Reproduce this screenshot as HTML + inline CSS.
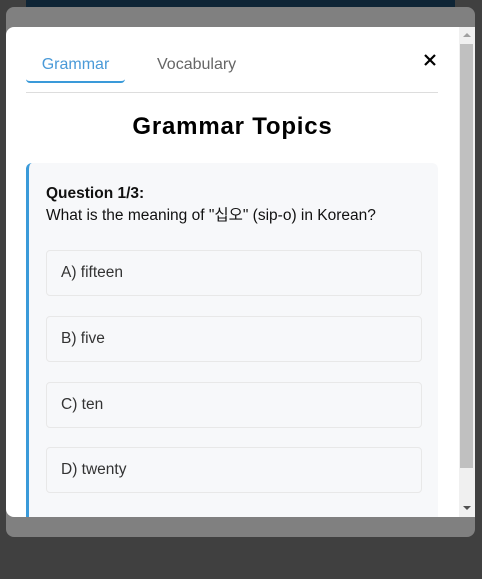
<!DOCTYPE html>
<html><head><style>
body{margin:0;width:482px;height:579px;background:#404040;position:relative;overflow:hidden;font-family:"Liberation Sans",Arial,sans-serif}
.nav{position:absolute;left:26px;top:0;width:429px;height:7px;background:#0f2536}
.grey{position:absolute;left:6px;top:7px;width:469px;height:530px;background:#808080;border-radius:8px}
.modal{position:absolute;left:6px;top:27px;width:453px;height:490px;background:#fff;border-radius:8px 0 0 8px;overflow:hidden}
.sb{position:absolute;left:459px;top:27px;width:16px;height:490px;background:#f0f0f0}
.thumb{position:absolute;left:1px;top:17px;width:13px;height:424px;background:#c0c0c0}
.tab{position:absolute;font-size:16px}
.t1{left:20px;width:99px;text-align:center;color:#4a9ad8;height:25px;border-bottom:2px solid #3a9ad9;border-radius:0 0 4px 4px}
.t2{left:151px;color:#666}
.line{position:absolute;left:20px;width:412px;height:1px;background:#ddd}
h1{position:absolute;left:0;width:453px;text-align:center;margin:0;font-size:24px;font-weight:bold;color:#000;letter-spacing:0.8px}
.card{position:absolute;left:20px;top:136px;width:409px;height:380px;background:#f7f8fa;border-left:3px solid #3a9ad9;border-radius:6px}
.q{position:absolute;left:17px;top:20px;font-size:15.5px;color:#111;line-height:21px}
.opt{position:absolute;left:17px;border:1px solid #e8e8e8;border-radius:4px;background:#f7f8fa;font-size:15.5px;color:#333;line-height:44px;padding-left:14px;box-sizing:border-box;width:376px;height:46px}
</style></head><body>
<div class="nav"></div>
<div class="grey"></div>
<div class="modal">
<div class="tab t1" style="top:29px">Grammar</div>
<div class="tab t2" style="top:29px">Vocabulary</div>
<svg style="position:absolute;left:418px;top:27px" width="12" height="12" viewBox="0 0 12 12"><path d="M1 1L11 11M11 1L1 11" stroke="#000" stroke-width="2.2"/></svg>
<div class="line" style="top:65px"></div>
<h1 style="top:86px">Grammar Topics</h1>
<div class="card">
<div class="q"><b>Question 1/3:</b><br>What is the meaning of "<span style="font-family:'Noto Sans CJK KR',sans-serif">십오</span>" (sip-o) in Korean?</div>
<div class="opt" style="top:87px">A) fifteen</div>
<div class="opt" style="top:153px">B) five</div>
<div class="opt" style="top:219px">C) ten</div>
<div class="opt" style="top:284px">D) twenty</div>
</div>
</div>
<div class="sb"><div class="thumb"></div>
<div style="position:absolute;left:4px;top:6px;border:4px solid transparent;border-bottom:4px solid #a0a0a0;border-top:0"></div>
<div style="position:absolute;left:4px;top:479px;border:4px solid transparent;border-top:4px solid #505050;border-bottom:0"></div>
</div>
</body></html>
